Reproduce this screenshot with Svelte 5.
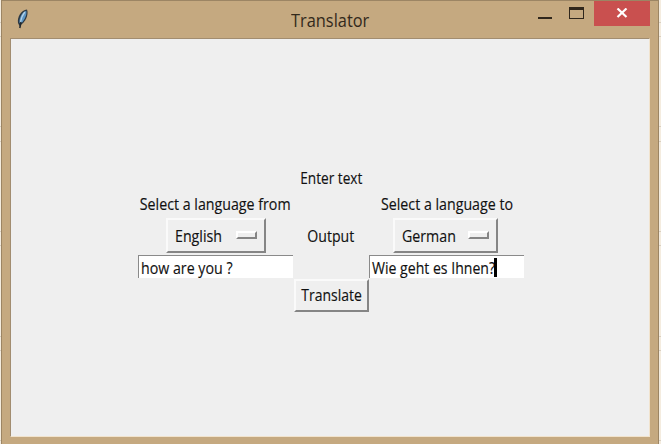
<script>
  const source = 'English';
  const target = 'German';
  const gridLines = [22, 36, 126, 141, 231, 245, 336, 350, 440];
</script>

<div class="desktop">
  <svg class="sheet" width="661" height="444">
    {#each gridLines as y}<path d="M0 {y + 0.5}H661" stroke="#d9cfc0" />{/each}
  </svg>
  <div class="window">
    <header>
      <svg class="feather" width="16" height="22" viewBox="0 0 16 22">
        <path d="M4.5 18 L3 15 C2 9 6 2 12 1.5 C13.5 5 12 12 7 16Z" fill="#2c3843" />
        <path d="M4.5 14.5 C4 10 7 4 11.2 2.7 C12.2 6 10 11.5 6.5 15Z" fill="#5c95c4" />
        <path d="M9.8 4 C7.4 7 6 10 5.3 14.5" stroke="#b5d3e8" stroke-width="1.3" fill="none" />
        <path d="M6 14 L4.8 20" stroke="#20272c" stroke-width="1.5" fill="none" />
      </svg>
      <h1><span>Translator</span></h1>
      <div class="controls">
        <i class="min"></i>
        <i class="max"></i>
        <button class="close" aria-label="Close">
          <svg width="12" height="10" viewBox="0 0 12 10"><path d="M1.5 .5 L10.5 9 M10.5 .5 L1.5 9" stroke="#fff" stroke-width="2.2" /></svg>
        </button>
      </div>
    </header>
    <main>
      <div class="form">
        <span></span><label class="mid enter"><b style:--s={0.88}>Enter text</b></label><span></span>
        <label><b>Select a language from</b></label><span></span><label><b>Select a language to</b></label>
        <button class="menu from"><b>{source}</b><i></i></button>
        <label class="mid"><b style:--s={0.91}>Output</b></label>
        <button class="menu wide"><b>{target}</b><i></i></button>
        <div class="entry"><b>how are you ?</b></div><span></span>
        <div class="entry"><b style:--s={0.908}>Wie geht es Ihnen?</b><i class="caret"></i></div>
        <span></span><button class="go"><b style:--s={0.9}>Translate</b></button><span></span>
      </div>
    </main>
  </div>
</div>

<style>
  :global(body) { background: #f4ecdf; overflow: hidden; }
  .desktop {
    width: 661px; height: 444px; box-sizing: border-box; padding: 0 2px 0 1px; position: relative;
    font: 15.5px/20px "Open Sans", "Noto Sans", sans-serif; color: #111;
  }
  .sheet { position: absolute; left: 0; top: 0; }
  .window {
    box-sizing: border-box; height: 444px; background: #c5a980; position: relative;
    border: 1px solid #9c8564; border-bottom: 0; display: flex; flex-direction: column;
    padding: 0 8px 7px;
  }
  header { height: 37px; flex: none; display: flex; align-items: flex-start; }
  .feather { margin: 7px 0 0 5px; flex: none; }
  h1 { flex: 1; margin: 7px 0 0 245px; font-size: 18px; line-height: 24px; font-weight: 400; color: #33291c; }
  h1 span { display: inline-block; transform: scaleX(.91); transform-origin: left; margin-left: 15px; }
  .controls { display: flex; }
  .min { width: 14px; height: 2px; background: #30271c; margin: 16px 17px 0 0; }
  .max { width: 15px; height: 12px; box-sizing: border-box; border: 1px solid #30271c; border-top-width: 3px; margin: 6px 10px 0 0; }
  .close { width: 56px; height: 25px; padding: 0 0 1px; border: 0; background: #c9504f; display: flex; align-items: center; justify-content: center; }
  main {
    flex: 1; box-sizing: border-box; background: #efefef; border: 1px solid #a28d70;
    border-right-color: #f1e3cd; border-bottom-color: #f1e3cd; padding: 125px 0 0 126px;
  }
  .form { display: grid; grid-template-columns: 156px 76px 155px; grid-template-rows: 26px 27px 37px 24px 34px; justify-items: center; align-items: center; }
  label { display: flex; justify-content: center; white-space: nowrap; width: 100%; }
  .enter { padding: 1px 0 0 1px; box-sizing: border-box; }
  b { font-weight: 400; -webkit-text-stroke: .15px; display: inline-block; transform: scaleX(var(--s, .917)); white-space: nowrap; }
  button { font: inherit; color: inherit; box-sizing: border-box; border-radius: 0; }
  .menu, .go { background: #efefef; border: 2px solid; border-color: #fafafa #858585 #858585 #fafafa; }
  .menu { width: 100px; height: 35px; padding: 0 7px; display: flex; align-items: center; justify-content: space-between; }
  .menu.from { margin-left: 1px; }
  .menu.wide { width: 105px; margin-right: 2px; }
  .menu b { transform-origin: left; }
  .menu i { box-sizing: border-box; width: 21px; height: 8px; flex: none; border: 2px solid; border-color: #fff #858585 #858585 #fff; margin-top: -2px; }
  .entry {
    box-sizing: border-box; width: 155px; height: 23px; background: #fff; border: solid #8a8a8a; border-width: 1px 0 0 1px;
    padding: 2px 0 0 2px; display: flex; line-height: 20px; position: relative;
  }
  .entry b { transform-origin: left; }
  .caret { position: absolute; left: 124px; top: 2px; width: 3px; height: 19px; background: #000; }
  .go { width: 75px; height: 33px; padding: 0; margin-left: 1px; }
  .go b { margin: 0 -5px; }
</style>
